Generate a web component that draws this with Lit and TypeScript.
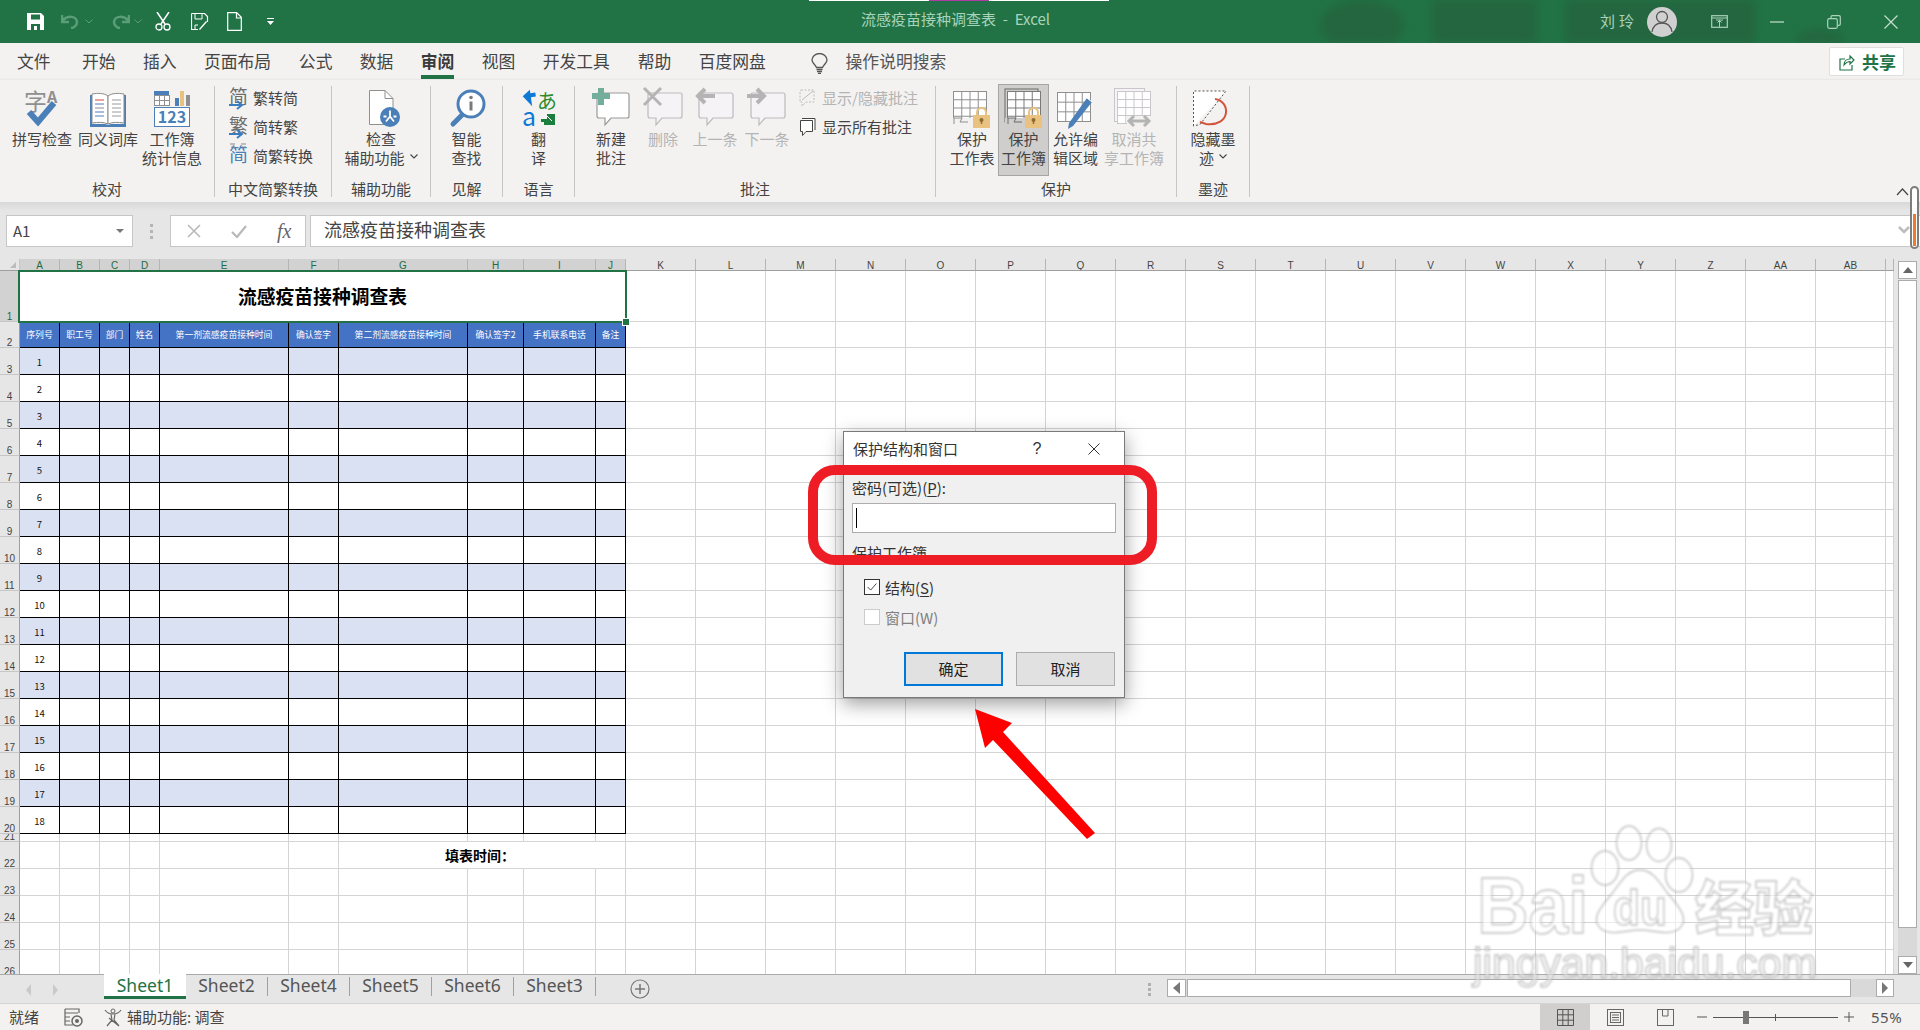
import { LitElement, html, css, svg } from "lit";
import { customElement } from "lit/decorators.js";

const LETTERS = "A B C D E F G H I J K L M N O P Q R S T U V W X Y Z AA AB".split(" ");
const HEADS = ["序列号", "职工号", "部门", "姓名", "第一剂流感疫苗接种时间", "确认签字", "第二剂流感疫苗接种时间", "确认签字2", "手机联系电话", "备注"];
const range = (a: number, b: number) => Array.from({ length: b - a + 1 }, (_, i) => a + i);

const ic = (w: number, h: number, body: unknown) =>
  html`<svg width=${w} height=${h} viewBox="0 0 ${w} ${h}" fill="none" overflow="visible">${body}</svg>`;

const bubble = (x: number, y: number, w: number, h: number, stroke: string, fill: string) => svg`
  <path d="M${x + 2} ${y}H${x + w - 2}Q${x + w} ${y} ${x + w} ${y + 2}V${y + h - 2}Q${x + w} ${y + h} ${x + w - 2} ${y + h}H${x + 14}L${x + 8} ${y + h + 7}V${y + h}H${x + 2}Q${x} ${y + h} ${x} ${y + h - 2}V${y + 2}Q${x} ${y} ${x + 2} ${y}Z" fill=${fill} stroke=${stroke} stroke-width="1.2"/>`;

const sheetGrid = (x: number, y: number, w: number, h: number, stroke: string, nx: number, ny: number) => svg`
  <rect x=${x + 0.5} y=${y + 0.5} width=${w} height=${h} fill="#fff" stroke=${stroke}/>
  ${range(1, nx - 1).map((i) => svg`<path d="M${x + 0.5 + (i * w) / nx} ${y}v${h}" stroke=${stroke}/>`)}
  ${range(1, ny - 1).map((i) => svg`<path d="M${x} ${y + 0.5 + (i * h) / ny}h${w}" stroke=${stroke}/>`)}`;

const lock = (x: number, y: number) => svg`
  <path d="M${x + 4} ${y + 9}V${y + 5.5}a4.5 4.5 0 0 1 9 0V${y + 9}" stroke="#e8c27e" stroke-width="2"/>
  <rect x=${x} y=${y + 8} width="17" height="13" fill="#e8c27e"/>
  <circle cx=${x + 8.5} cy=${y + 13} r="2" fill="#8a6a35"/><path d="M${x + 8.5} ${y + 13}v4" stroke="#8a6a35" stroke-width="1.4"/>`;

const I = {
  spell: ic(36, 40, svg`
    <text x="0" y="22" class="svgt" font-size="23" fill="#8f8f8f">字</text>
    <text x="23" y="15" class="svgt" font-size="16" font-weight="700" fill="#8f8f8f">A</text>
    <path d="M5 24l9 10L30 15" stroke="#4a7fb8" stroke-width="6"/>`),
  book: ic(38, 40, svg`<g transform="translate(0 4)">
    <path d="M1 3h2v29h13l3 1 3-1h13V3h2v32H1Z" fill="#4a7fb8"/>
    <path d="M3 2c6-1 12-1 16 2v28c-4-2-10-2-16-1Z" fill="#fff" stroke="#8a8a8a"/>
    <path d="M35 2c-6-1-12-1-16 2v28c4-2 10-2 16-1Z" fill="#fff" stroke="#8a8a8a"/>
    <path d="M6 8h9" stroke="#d24b33"/><path d="M6 12h9M6 20h9M6 24h9" stroke="#4a7fb8"/><path d="M6 16h9" stroke="#8a8a8a"/>
    <path d="M23 8h9M23 12h9M23 16h9M23 20h9M23 24h9" stroke="#9a9a9a"/></g>`),
  stats: ic(38, 40, svg`<g transform="translate(0 2)">
    <rect x="1" y="1" width="15" height="4" fill="#4a7fb8"/>
    ${sheetGrid(1, 5, 15, 10, "#8f8f8f", 3, 2)}
    <rect x="22" y="8" width="4" height="8" fill="#4a7fb8"/><rect x="27" y="1" width="4" height="15" fill="#e8c27e"/><rect x="33" y="5" width="4" height="11" fill="#8f8f8f"/>
    <rect x="1.5" y="17.5" width="35" height="19" fill="#fff" stroke="#4a7fb8"/>
    <text x="19" y="33" text-anchor="middle" class="svgt" font-size="16" font-weight="700" fill="#4a7fb8">123</text></g>`),
  check: ic(40, 40, svg`
    <path d="M8.500 2.500H24l8 8V36.500H8.500Z" fill="#fff" stroke="#8f8f8f"/><path d="M24 2.500v8h8" stroke="#8f8f8f"/>
    <circle cx="29" cy="29" r="10" fill="#4a7fb8"/>
    <path d="M29 22.500v6m-4 5 4-5 4 5M22.500 28.500h3M32.500 28.500h3" stroke="#fff" stroke-width="1.800"/>`),
  search: ic(38, 44, svg`
    <circle cx="23" cy="16" r="13" fill="#fff" stroke="#4a7fb8" stroke-width="3"/>
    <path d="M14 27 5 36" stroke="#4a7fb8" stroke-width="5" stroke-linecap="round"/>
    <circle cx="23" cy="9.500" r="1.800" fill="#7a7a7a"/><path d="M23 13.500v9" stroke="#7a7a7a" stroke-width="3"/>`),
  translate: ic(36, 44, svg`
    <path d="M2 7.500 10 2v3.500h5v4h-5v9Z" transform="rotate(-8 8 10)" fill="#0f7ad6"/>
    <text x="16" y="21" class="svgt" font-size="20" fill="#2e8b2e">あ</text>
    <text x="1" y="38" class="svgt" font-size="26" fill="#0f7ad6" textLength="14" lengthAdjust="spacingAndGlyphs">a</text>
    <path d="M20 31h6v-5l8 0v11H23v-3h-3Z" fill="#1a7f3c"/><path d="M26 28l5 5" stroke="#fff" stroke-width="1"/>`),
  newc: ic(38, 40, svg`${bubble(5, 5, 32, 25, "#9a9a9a", "#fff")}<path d="M0 8h18M9 0v17" stroke="#72ae9b" stroke-width="6"/>`),
  delc: ic(40, 40, svg`${bubble(5, 5, 34, 25, "#bdbabd", "#f6f3f7")}<path d="M1 0 18 17M18 0 1 17" stroke="#b4b4b4" stroke-width="3"/>`),
  prevc: ic(40, 40, svg`${bubble(4, 5, 34, 25, "#bdbabd", "#f6f3f7")}<path d="M20 8H3m7-7-7 7 7 7" stroke="#b4b4b4" stroke-width="4"/>`),
  nextc: ic(40, 40, svg`${bubble(4, 5, 34, 25, "#bdbabd", "#f6f3f7")}<path d="M0 8h17m-7-7 7 7-7 7" stroke="#b4b4b4" stroke-width="4"/>`),
  prot: ic(40, 42, svg`${sheetGrid(1, 3, 33, 33, "#8f8f8f", 4, 4)}<rect x="1" y="30" width="34" height="7" fill="#f3f2f1"/><path d="M2 36v-6h8l-2 4h8" stroke="#8f8f8f"/>${lock(21, 19)}`),
  protb: ic(40, 42, svg`<rect x="1" y="1" width="33" height="33" fill="#cfcecc" stroke="#6a6a6a"/>${sheetGrid(3, 3, 33, 33, "#7a7a7a", 4, 4)}<rect x="1" y="30" width="34" height="8" fill="#cfcecc"/><path d="M4 36v-6h8l-2 4h8" stroke="#6a6a6a"/>${lock(21, 19)}`),
  allow: ic(40, 44, svg`${sheetGrid(1, 4, 33, 29, "#8f8f8f", 4, 3)}<path d="M36 14 17 38l-5 3 1-6L31 10Z" fill="#4a7fb8"/><path d="M31 10l5 4" stroke="#fff"/>`),
  unshare: ic(40, 42, svg`<rect x=".5" y=".5" width="30" height="33" stroke="#c9c6cc" fill="#f6f3f7"/>${sheetGrid(3, 3, 33, 32, "#c9c6cc", 4, 4)}<rect x="13" y="28" width="27" height="14" fill="#f3f2f1"/><path d="M15 33h20m-15-5-5 5 5 5m10-10 5 5-5 5" stroke="#b4b4b4" stroke-width="3"/>`),
  ink: ic(40, 40, svg`
    <path d="M.5 3H33L.5 38Z" fill="#fff"/><path d="M.500 38V3H33L7 36.500Z" stroke="#555" stroke-dasharray="2 2"/>
    <path d="M22 11c16 2 16 28-9 25l-6-2" stroke="#d2553c" stroke-width="2"/>`),
  showc: ic(18, 20, svg`<path d="M3 2h13v12H8l-4 4v-4H2V3Z" stroke="#bdbabd" stroke-dasharray="2 1.500" fill="#f3f2f1"/><path d="M4 12 15 3" stroke="#bdbabd"/>`),
  allc: ic(18, 20, svg`<path d="M4 1.500h13V13M2.500 3.500h12v11H8l-3.500 4v-4h-2Z" stroke="#444" fill="#fff"/>`),
};

const smallIcon = (ch: string, blue = false) => ic(24, 26, svg`
  <text x="0" y="19" class="svgt" font-size="19" fill=${blue ? "#4a7fb8" : "#6d6d6d"}>${ch}</text>
  ${blue ? svg`<path d="M1 1h5M2 4h4M12 1h5M13 4h4" stroke="#888"/>` : svg`<path d="M0 20h12m-4-4 5 4-5 4" stroke="#3a7cc0" stroke-width="2"/>`}`);

const chev = html`<svg class="chev" width="8" height="5" viewBox="0 0 8 5" fill="none"><path d="M.5.500 4 4 7.500.500" stroke="#444" stroke-width="1.100"/></svg>`;

@customElement("big-btn")
class BigBtn extends LitElement {
  static properties = { w: { type: Number }, icon: {}, l1: {}, l2: {}, dis: { type: Boolean }, on: { type: Boolean }, more: { type: Boolean } };
  w = 52; icon: unknown; l1 = ""; l2 = ""; dis = false; on = false; more = false;
  static styles = css`
    :host { display: block; flex: none; }
    .b { box-sizing: border-box; height: 92px; padding-top: 3px; display: flex; flex-direction: column; align-items: center; color: #444; font: 15px/19px "Noto Sans CJK SC", sans-serif; white-space: nowrap; border: 1px solid transparent; }
    .b.dis { color: #b4b4b4; }
    .b.on { background: #cfcecc; border-color: #a6a6a6; }
    .i { height: 41px; display: flex; align-items: flex-start; justify-content: center; }
    .svgt { font-family: "Noto Sans CJK SC", sans-serif; }
    .chev { margin: 0 0 3px 5px; }
    .l { display: flex; align-items: center; height: 19px; }
  `;
  render() {
    return html`<div class="b ${this.dis ? "dis" : ""} ${this.on ? "on" : ""}" style="width:${this.w}px">
      <div class="i">${this.icon}</div>
      <div class="l">${this.l1}</div>
      <div class="l">${this.l2}${this.more ? chev : ""}</div>
    </div>`;
  }
}

@customElement("app-root")
class AppRoot extends LitElement {
  static styles = css`
    :host { display: block; width: 1920px; height: 1030px; position: relative; overflow: hidden; font-family: "Noto Sans CJK SC", sans-serif; background: #e6e6e6; color: #444; }
    .svgt { font-family: "Noto Sans CJK SC", "Liberation Sans", sans-serif; }

    .title { height: 43px; background: #217346; position: relative; display: flex; align-items: center; color: #a9d3ba; overflow: hidden; }
    .texture { position: absolute; inset: 0; filter: blur(4px); }
    .strip { position: absolute; left: 809px; top: 0; width: 300px; height: 1px; background: #fff; }
    .strip i { position: absolute; left: 120px; width: 60px; height: 1px; background: #b03aa8; }
    .qat { position: relative; display: flex; align-items: center; padding-left: 27px; width: 861px; box-sizing: border-box; height: 43px; flex: none; }
    .qi { display: block; flex: none; }
    .ttext { position: relative; font-size: 15px; width: 739px; flex: none; white-space: pre; margin-top: -6px; }
    .user { position: relative; font-size: 15px; width: 47px; flex: none; letter-spacing: 4px; white-space: nowrap; margin-top: -2px; }
    .avatar { position: relative; flex: none; width: 30px; height: 30px; border-radius: 50%; background: #d0d0d0; display: block; }
    .winb { position: relative; display: flex; align-items: center; flex: none; }

    .tabs { height: 37px; background: #f3f2f1; display: flex; position: relative; font-size: 16.8px; color: #444; }
    .tab { position: relative; height: 37px; line-height: 36px; flex: none; white-space: nowrap; }
    .tab.act { font-weight: 700; color: #3a3a3a; }
    .tab.act::after { content: ""; position: absolute; left: 0; right: 0; top: 32px; height: 4px; background: #217346; }
    .bulb { flex: none; margin: 10px 18px 0 0; display: block; }
    .share { position: absolute; left: 1829px; top: 4px; width: 75px; height: 29px; box-sizing: border-box; background: #fff; border: 1px solid #e1dfdd; border-radius: 2px; display: flex; align-items: center; padding-left: 9px; gap: 7px; color: #217346; font-weight: 700; font-size: 17px; }

    .ribbon { height: 122px; background: #f3f2f1; display: flex; position: relative; box-shadow: 0 1px 3px rgba(0,0,0,.22); z-index: 2; box-sizing: border-box; padding-top: 6px; }
    .group { box-sizing: border-box; height: 111px; border-right: 1px solid #c8c6c4; flex: none; display: flex; flex-direction: column; }
    .row { display: flex; height: 92px; margin-top: -2px; flex: none; }
    .glabel { text-align: center; font-size: 15px; line-height: 15px; margin-top: 5px; color: #444; white-space: nowrap; }
    .smalls { display: flex; flex-direction: column; flex: none; margin-top: -1px; }
    .sm { display: flex; align-items: center; height: 29px; font-size: 15px; white-space: nowrap; color: #444; }
    .sm.dis { color: #b4b4b4; }
    .sm .si { width: 24px; flex: none; display: flex; }
    .collapse { position: absolute; left: 1896px; top: 108px; display: block; }

    .fbar { height: 57px; flex: none; box-sizing: border-box; padding-top: 13px; background: linear-gradient(#d8d8d8, #e6e6e6 9px); display: flex; font-size: 15px; position: relative; z-index: 3; }
    .fb { box-sizing: border-box; height: 32px; background: #fff; border: 1px solid #c6c6c6; flex: none; display: flex; align-items: center; }
    .name { margin-left: 6px; width: 127px; padding: 0 8px 2px 6px; justify-content: space-between; color: #444; font-size: 15px; }
    .caret { width: 0; height: 0; border: 4px solid transparent; border-top: 4px solid #777; border-bottom: 0; margin-top: 2px; }
    .dots { width: 37px; flex: none; display: flex; flex-direction: column; align-items: center; gap: 3px; justify-content: center; height: 32px; }
    .dots i { width: 3px; height: 3px; background: #b5b5b5; display: block; }
    .fn { width: 136px; padding: 0 0 0 16px; gap: 30px; }
    .fx { font: italic 400 20px/20px "Liberation Serif", serif; color: #666; }
    .finput { margin-left: 4px; flex: 1; font-size: 18px; padding: 0 0 4px 13px; border-right: 0; color: #444; }
    .fchev { position: absolute; left: 1898px; top: 24px; display: block; }
    .orange { position: absolute; left: 1910px; top: -16px; width: 9px; height: 63px; box-sizing: border-box; border: 2px solid #7d7d7d; border-radius: 5px; background: #fff; display: flex; align-items: flex-end; justify-content: center; padding-bottom: 1px; }
    .orange i { display: block; width: 3px; height: 32px; background: #ee7b2d; }

    .main { height: 715px; flex: none; display: flex; }
    .sheet { width: 1894px; flex: none; height: 715px; overflow: hidden; display: grid; background: #fff; box-sizing: border-box;
      grid-template-columns: 20px 40px 40px 30px 30px 129px 50px 129px 56px 72px 30px repeat(18, 70px) 8px;
      grid-template-rows: 12px 51px 26px repeat(18, 27px) 8px repeat(5, 27px); }
    .corner { background: #e6e6e6; border-right: 1px solid #c6c6c6; border-bottom: 1px solid #9f9f9f; position: relative; box-sizing: border-box; }
    .corner::after { content: ""; position: absolute; right: 3px; bottom: 2px; border-style: solid; border-width: 0 0 6px 6px; border-color: transparent transparent #bcbcbc transparent; }
    .ch { box-sizing: border-box; background: #e6e6e6; border-right: 1px solid #b5b5b5; border-bottom: 1px solid #9f9f9f; font: 10px/13px "Liberation Sans", sans-serif; color: #444; text-align: center; overflow: hidden; }
    .ch.sel { background: #d2d2d2; color: #1f6b41; }
    .rh { box-sizing: border-box; background: #e6e6e6; border-right: 1px solid #9f9f9f; border-bottom: 1px solid #c6c6c6; font: 10px/9px "Liberation Sans", sans-serif; color: #444; display: flex; align-items: flex-end; justify-content: center; overflow: hidden; }
    .rh.sel { background: #d2d2d2; color: #1f6b41; }
    .c { box-sizing: border-box; border-right: 1px solid #d4d4d4; border-bottom: 1px solid #d4d4d4; min-width: 0; }
    .tcell { border-right-color: #000; border-bottom-color: #000; display: flex; align-items: center; justify-content: center; font-size: 9.5px; color: #111; padding-top: 2px; }
    .tcell.band { background: #d9e1f2; }
    .thead { background: #4472c4; color: #fff; font-size: 8.8px; font-weight: 400; white-space: nowrap; padding-top: 0; }
    .titlec { grid-column: span 10; position: relative; display: flex; align-items: center; justify-content: center; font-size: 18.8px; font-weight: 700; color: #000; border: 2px solid #217346; margin: -1px -1px -1px -2px; z-index: 1; padding-bottom: 2px; }
    .handle { position: absolute; right: -4px; bottom: -4px; width: 6px; height: 6px; background: #217346; border: 1px solid #fff; box-sizing: content-box; margin: 0 -1px -1px 0; }
    .fill { grid-column: span 4; display: flex; align-items: center; justify-content: center; font-size: 14px; font-weight: 700; color: #000; padding-right: 4px; white-space: nowrap; }

    .vbar { width: 26px; flex: none; box-sizing: border-box; padding: 2px 3px 0 4px; display: flex; flex-direction: column; background: #e6e6e6; }
    .sbtn { box-sizing: border-box; background: #fff; border: 1px solid #ababab; flex: none; display: flex; align-items: center; justify-content: center; }
    .vbar .sbtn { height: 18px; }
    .vthumb { box-sizing: border-box; height: 648px; margin-top: 1px; background: #fff; border: 1px solid #ababab; flex: none; }
    .vtrack { flex: 1; background: #d9d9d9; }
    .ta { width: 0; height: 0; border: solid transparent; }
    .ta.u { border-width: 0 5px 6px; border-bottom-color: #666; }
    .ta.d { border-width: 6px 5px 0; border-top-color: #666; }
    .ta.l { border-width: 6px 7px 6px 0; border-right-color: #777; }
    .ta.r { border-width: 6px 0 6px 6px; border-left-color: #777; }

    .sbar { height: 29px; flex: none; box-sizing: border-box; display: flex; background: #e6e6e6; border-top: 1px solid #ababab; position: relative; font: 17.500px/21px "Noto Sans", sans-serif; color: #555; }
    .nav { width: 104px; flex: none; display: flex; align-items: center; padding-left: 26px; gap: 22px; box-sizing: border-box; padding-top: 1px; }
    .tl { width: 0; height: 0; border: solid transparent; }
    .tl.a { border-width: 6px 5px 6px 0; border-right-color: #c9c9c9; }
    .tl.b { border-width: 6px 0 6px 5px; border-left-color: #c9c9c9; }
    .stab { height: 19px; flex: none; box-sizing: border-box; margin-top: 2px; line-height: 16px; border-right: 1px solid #a0a0a0; width: 82px; text-align: center; white-space: nowrap; }
    .stab.act { width: 82px; height: 25px; margin-top: -1px; padding-top: 1px; background: #fff; color: #217346; border-right: 0; border-bottom: 3px solid #217346; line-height: 20px; }
    .plus { margin: 4px 0 0 34px; display: block; flex: none; }
    .sdots { position: absolute; left: 1148px; top: 8px; display: flex; flex-direction: column; gap: 2px; }
    .sdots i { display: block; width: 3px; height: 3px; background: #b0b0b0; }
    .hbar { position: absolute; left: 1167px; top: 4px; width: 727px; height: 18px; display: flex; background: #d9d9d9; }
    .hbar .sbtn { width: 19px; height: 18px; }
    .hbar .last { width: 18px; }
    .hthumb { box-sizing: border-box; width: 664px; margin-left: 1px; background: #fff; border: 1px solid #ababab; }
    .hsp { flex: 1; }

    .status { height: 27px; flex: none; background: #f3f2f1; display: flex; align-items: center; position: relative; font-size: 15px; color: #444; border-top: 1px solid #d5d5d5; box-sizing: border-box; }
    .status .t1 { margin: -2px 0 0 9px; width: 55px; flex: none; }
    .status .ic2 { display: block; flex: none; }
    .status .t2 { white-space: nowrap; flex: none; margin-top: -2px; }
    .views { margin-left: auto; display: flex; align-items: center; height: 26px; flex: none; margin-right: 20px; }
    .view { width: 50px; height: 26px; display: flex; align-items: center; justify-content: center; flex: none; }
    .view.act { background: #d0cfcd; }
    .zoomv { display: flex; align-items: center; flex: none; margin-left: 7px; }
    .slider { width: 125px; height: 1px; background: #555; position: relative; margin: 0 6px; flex: none; }
    .thumb { position: absolute; left: 30px; top: -6px; width: 6px; height: 13px; background: #777; }
    .tick { position: absolute; left: 62px; top: -3px; width: 1px; height: 7px; background: #555; }
    .pct { margin-left: 17px; width: 29px; font: 15px "Noto Sans", sans-serif; flex: none; white-space: nowrap; letter-spacing: .5px; color: #555; }

    .dialog { position: absolute; left: 843px; top: 431px; width: 282px; height: 267px; box-sizing: border-box; border: 1px solid #7a7a7a; background: #f0f0f0; box-shadow: 0 6px 18px rgba(0,0,0,.38); z-index: 5; display: flex; flex-direction: column; color: #333; font-size: 15px; }
    .dtitle { height: 35px; box-sizing: border-box; padding: 0 0 2px 9px; flex: none; background: #fff; display: flex; align-items: center; color: #333; }
    .dtitle .t { width: 174px; flex: none; white-space: nowrap; }
    .q { width: 20px; text-align: center; font: 16px "Liberation Sans", sans-serif; flex: none; }
    .dclose { margin-left: 41px; display: block; flex: none; }
    .dbody { padding: 11px 7px 0 8px; display: flex; flex-direction: column; flex: 1; }
    .lbl { line-height: 20px; height: 20px; white-space: nowrap; }
    u { text-underline-offset: 2px; }
    .input { box-sizing: border-box; height: 30px; margin-top: 5px; background: #fff; border: 1px solid #adadad; width: 264px; padding: 4px 3px; flex: none; }
    .input i { display: block; width: 1px; height: 20px; background: #000; }
    .legend { margin-top: 10px; height: 20px; line-height: 20px; }
    .chk { display: flex; align-items: center; gap: 5px; height: 30px; padding-left: 12px; }
    .box { box-sizing: border-box; width: 16px; height: 16px; border: 1px solid #333; background: #fff; display: block; flex: none; }
    .chk.first { margin-top: 9px; }
    .chk.dis { color: #808080; }
    .chk.dis .box { border-color: #ccc; }
    .btns { display: flex; gap: 13px; padding-left: 52px; margin-top: 20px; }
    .btn { box-sizing: border-box; width: 99px; height: 34px; background: #e1e1e1; border: 1px solid #adadad; display: flex; align-items: center; justify-content: center; flex: none; color: #222; padding-bottom: 1px; }
    .btn.def { border: 2px solid #0078d7; }
    .over { position: absolute; left: 0; top: 0; width: 1920px; height: 1030px; z-index: 6; pointer-events: none; display: block; }
    .wm { position: absolute; left: 0; top: 0; width: 1920px; height: 1030px; z-index: 3; pointer-events: none; display: block; filter: blur(.8px); }
    .wm text, .wm ellipse, .wm path { fill: rgba(255,255,255,.55); stroke: rgba(160,160,160,.65); stroke-width: 1.4px; }
  `;

  private tabsRow() {
    const t: [string, number, boolean?][] = [["文件", 17], ["开始", 82], ["插入", 143], ["页面布局", 204], ["公式", 299], ["数据", 360], ["审阅", 421, true], ["视图", 482], ["开发工具", 543], ["帮助", 638], ["百度网盘", 699]];
    let x = 0;
    return html`<div class="tabs">
      ${t.map(([n, at, act]) => {
        const m = at - x;
        x = at + n.length * 16.8;
        return html`<div class="tab ${act ? "act" : ""}" style="margin-left:${m}px">${n}</div>`;
      })}
      <svg class="bulb" style="margin-left:${811 - x}px" width="17" height="21" viewBox="0 0 17 21" fill="none"><path d="M5.500 14.500C4 11 1 10 1 7a7.500 6.500 0 0 1 15 0c0 3-3 4-4.500 7.500Z" stroke="#555" stroke-width="1.300"/><path d="M5.500 16.500h6M6 18.500h5M7 20.500h3" stroke="#555" stroke-width="1.300"/></svg>
      <div class="tab" style="color:#555">操作说明搜索</div>
      <div class="share">
        <svg width="16" height="18" viewBox="0 0 16 18" fill="none"><path d="M6 6H1v11h12v-5" stroke="#217346" stroke-width="1.200"/><path d="M5 12c0-4 3-6 6-6V3l4 4-4 4V8.500c-2 0-4 1-6 3.500Z" stroke="#217346" stroke-width="1.200"/></svg>
        <span>共享</span>
      </div>
    </div>`;
  }

  private big(w: number, icon: unknown, l1: string, l2: string, o: { dis?: boolean; on?: boolean; more?: boolean } = {}) {
    return html`<big-btn .w=${w} .icon=${icon} .l1=${l1} .l2=${l2} .dis=${!!o.dis} .on=${!!o.on} .more=${!!o.more}></big-btn>`;
  }

  private ribbon() {
    return html`<div class="ribbon">
      <div class="group" style="width:215px"><div class="row" style="padding-left:9px">
        ${this.big(66, I.spell, "拼写检查", "")}${this.big(66, I.book, "同义词库", "")}${this.big(62, I.stats, "工作簿", "统计信息")}
      </div><div class="glabel">校对</div></div>
      <div class="group" style="width:117px"><div class="row" style="padding-left:14px"><div class="smalls">
        <div class="sm"><span class="si">${smallIcon("简")}</span>繁转简</div>
        <div class="sm"><span class="si">${smallIcon("繁")}</span>简转繁</div>
        <div class="sm"><span class="si">${smallIcon("简", true)}</span>简繁转换</div>
      </div></div><div class="glabel">中文简繁转换</div></div>
      <div class="group" style="width:99px"><div class="row">${this.big(98, I.check, "检查", "辅助功能", { more: true })}</div><div class="glabel">辅助功能</div></div>
      <div class="group" style="width:72px"><div class="row">${this.big(71, I.search, "智能", "查找")}</div><div class="glabel">见解</div></div>
      <div class="group" style="width:72px"><div class="row">${this.big(71, I.translate, "翻", "译")}</div><div class="glabel">语言</div></div>
      <div class="group" style="width:361px"><div class="row" style="padding-left:10px">
        ${this.big(52, I.newc, "新建", "批注")}${this.big(52, I.delc, "删除", "", { dis: true })}${this.big(52, I.prevc, "上一条", "", { dis: true })}${this.big(52, I.nextc, "下一条", "", { dis: true })}
        <div class="smalls" style="margin-left:5px">
          <div class="sm dis"><span class="si">${I.showc}</span>显示/隐藏批注</div>
          <div class="sm"><span class="si">${I.allc}</span>显示所有批注</div>
        </div>
      </div><div class="glabel">批注</div></div>
      <div class="group" style="width:241px"><div class="row" style="padding-left:10px">
        ${this.big(52, I.prot, "保护", "工作表")}${this.big(51, I.protb, "保护", "工作簿", { on: true })}${this.big(53, I.allow, "允许编", "辑区域")}${this.big(64, I.unshare, "取消共", "享工作簿", { dis: true })}
      </div><div class="glabel">保护</div></div>
      <div class="group" style="width:73px"><div class="row">${this.big(72, I.ink, "隐藏墨", "迹", { more: true })}</div><div class="glabel">墨迹</div></div>
      <svg class="collapse" width="13" height="8" viewBox="0 0 13 8" fill="none"><path d="M1 7 6.500 1 12 7" stroke="#444" stroke-width="1.200"/></svg>
    </div>`;
  }

  private sheet() {
    const cells: unknown[] = [html`<div class="corner"></div>`];
    LETTERS.forEach((l, i) => cells.push(html`<div class="ch ${i < 10 ? "sel" : ""}">${l}</div>`));
    cells.push(html`<div class="ch"></div>`);
    for (const r of range(1, 26)) {
      cells.push(html`<div class="rh ${r === 1 ? "sel" : ""}">${r}</div>`);
      let start = 0;
      if (r === 1) {
        cells.push(html`<div class="c titlec">流感疫苗接种调查表<i class="handle"></i></div>`);
        start = 10;
      } else if (r === 2) {
        HEADS.forEach((h) => cells.push(html`<div class="c tcell thead">${h}</div>`));
        start = 10;
      } else if (r >= 3 && r <= 20) {
        const band = r % 2 === 1;
        for (let k = 0; k < 10; k++) cells.push(html`<div class="c tcell ${band ? "band" : ""}">${k === 0 ? r - 2 : ""}</div>`);
        start = 10;
      } else if (r === 22) {
        for (let k = 0; k < 6; k++) cells.push(html`<div class="c"></div>`);
        cells.push(html`<div class="c fill">填表时间：</div>`);
        start = 10;
      }
      for (let k = start; k < 29; k++) cells.push(html`<div class="c"></div>`);
    }
    return html`<div class="sheet">${cells}</div>`;
  }

  private status() {
    return html`<div class="status">
      <span class="t1">就绪</span>
      <svg class="ic2" width="19" height="19" viewBox="0 0 19 19" fill="none"><path d="M1 1h14v4M1 1v16h8M1 5h13M1 9h5M1 13h5" stroke="#666" stroke-width="1.200"/><circle cx="13" cy="13" r="5" stroke="#666" stroke-width="1.500"/><circle cx="13" cy="13" r="2" fill="#666"/></svg>
      <svg class="ic2" style="margin-left:21px" width="18" height="19" viewBox="0 0 18 19" fill="none"><circle cx="9" cy="3" r="2" stroke="#666"/><path d="M1 2c2 3 4 4 8 4s6-1 8-4M7 6l1 6-5 6M11 6l-1 6 5 6M5 10l10 8" stroke="#666" stroke-width="1.200"/></svg>
      <span class="t2" style="margin-left:5px">辅助功能: 调查</span>
      <div class="views">
        <div class="view act"><svg width="17" height="17" viewBox="0 0 17 17" fill="none"><path d="M.5.500h16v16H.500ZM.5 5.800h16M.5 11.200h16M5.800.5v16M11.200.5v16" stroke="#555"/></svg></div>
        <div class="view"><svg width="17" height="17" viewBox="0 0 17 17" fill="none"><rect x=".5" y=".5" width="16" height="16" stroke="#666"/><rect x="3.500" y="3.500" width="10" height="10" stroke="#666"/><path d="M5 6h7M5 8.500h7M5 11h7" stroke="#666"/></svg></div>
        <div class="view"><svg width="17" height="17" viewBox="0 0 17 17" fill="none"><rect x=".5" y=".5" width="16" height="16" stroke="#666"/><path d="M5.500.500V7H11V.5" stroke="#666"/></svg></div>
        <div class="zoomv">
          <svg width="10" height="2" viewBox="0 0 10 2"><path d="M0 1h10" stroke="#555"/></svg>
          <div class="slider"><i class="tick"></i><i class="thumb"></i></div>
          <svg width="10" height="10" viewBox="0 0 10 10"><path d="M0 5h10M5 0v10" stroke="#555"/></svg>
          <span class="pct">55%</span>
        </div>
      </div>
    </div>`;
  }

  render() {
    return html`
      <div class="title">
        <svg class="texture" viewBox="0 0 1920 43" width="1920" height="43" preserveAspectRatio="none">
          <g fill="#24663f">
            <ellipse cx="1362" cy="25" rx="42" ry="25"/><rect x="1432" y="-10" width="105" height="63"/><rect x="1565" y="-10" width="190" height="63"/>
            <ellipse cx="1820" cy="44" rx="26" ry="14"/>
          </g>
        </svg>
        <div class="strip"><i></i></div>
        <div class="qat">
          <svg class="qi" width="17" height="17" viewBox="0 0 17 17"><path d="M0 0h14l3 3v14H0Z" fill="#fff"/><rect x="4" y="1.500" width="9" height="5" fill="#217346"/><path d="M4 11h9v6h-3v-4H7v4H4Z" fill="#217346"/></svg>
          <svg class="qi" style="margin-left:17px" width="20" height="15" viewBox="0 0 20 15" fill="none"><path d="M2 6c4-4 13-5 14 2 0 3-3 6-6 6M1 1v7h7" stroke="#5a9d78" stroke-width="2.500"/></svg>
          <svg class="qi" style="margin-left:4px" width="8" height="5" viewBox="0 0 8 5" fill="none"><path d="M.5.500 4 4 7.500.500" stroke="#5a9d78"/></svg>
          <svg class="qi" style="margin-left:17px" width="20" height="15" viewBox="0 0 20 15" fill="none"><path d="M18 6C14 2 5 1 4 8c0 3 3 6 6 6M19 1v7h-7" stroke="#5a9d78" stroke-width="2.500"/></svg>
          <svg class="qi" style="margin-left:4px" width="8" height="5" viewBox="0 0 8 5" fill="none"><path d="M.5.500 4 4 7.500.500" stroke="#5a9d78"/></svg>
          <svg class="qi" style="margin-left:13px" width="16" height="19" viewBox="0 0 16 19" fill="none"><path d="M2 0l8 12M14 0 6 12" stroke="#fff" stroke-width="1.500"/><circle cx="4" cy="15" r="3" stroke="#fff" stroke-width="1.300"/><circle cx="12" cy="15" r="3" stroke="#fff" stroke-width="1.300"/></svg>
          <svg class="qi" style="margin-left:20px" width="18" height="18" viewBox="0 0 18 18" fill="none"><path d="M.5.500h13l3 3V9M.5.500v16H7" stroke="#fff" stroke-width="1.200"/><path d="M4 1v5h7V1M4 17v-5h3" stroke="#fff"/><path d="M16 9 9 17l-1-1 7-8Z" fill="#fff"/></svg>
          <svg class="qi" style="margin-left:18px" width="15" height="19" viewBox="0 0 15 19" fill="none"><path d="M.7.700h9l4.600 4.600v13H.7ZM9.500 1v5h5" stroke="#fff" stroke-width="1.200"/></svg>
          <svg class="qi" style="margin-left:25px" width="7" height="8" viewBox="0 0 7 8"><path d="M0 0h7v1H0ZM0 3h7L3.500 7Z" fill="#fff"/></svg>
        </div>
        <div class="ttext">流感疫苗接种调查表  -  Excel</div>
        <div class="user">刘玲</div>
        <svg class="avatar" viewBox="0 0 30 30" fill="none"><circle cx="15" cy="10" r="5.500" stroke="#555" stroke-width="1.300"/><path d="M5 25c1-6 5-9 10-9s9 3 10 9" stroke="#555" stroke-width="1.300"/></svg>
        <svg class="winb" style="margin-left:34px" width="17" height="13" viewBox="0 0 17 13" fill="none"><rect x=".7" y=".7" width="15.600" height="11.600" stroke="#a9d3ba" stroke-width="1.200"/><path d="M1 3h15M5 5h7M8.500 5.500V12M6.500 7.500 8.500 5.500l2 2" stroke="#a9d3ba"/></svg>
        <svg class="winb" style="margin-left:42px" width="14" height="2" viewBox="0 0 14 2"><path d="M0 1h14" stroke="#c5dfcf" stroke-width="1.200"/></svg>
        <svg class="winb" style="margin-left:43px" width="14" height="14" viewBox="0 0 14 14" fill="none"><rect x=".7" y="3.700" width="9.600" height="9.600" rx="1.500" stroke="#a9d3ba" stroke-width="1.200"/><path d="M4 3V2c0-.8.500-1.300 1.300-1.300H12c.8 0 1.300.5 1.300 1.300v7c0 .8-.5 1.300-1.300 1.300h-1" stroke="#a9d3ba" stroke-width="1.200"/></svg>
        <svg class="winb" style="margin-left:43px" width="14" height="14" viewBox="0 0 14 14" fill="none"><path d="M.5.500l13 13M13.500.500l-13 13" stroke="#c5dfcf" stroke-width="1.200"/></svg>
      </div>
      ${this.tabsRow()}
      ${this.ribbon()}
      <div class="fbar">
        <div class="fb name"><span>A1</span><i class="caret"></i></div>
        <div class="dots"><i></i><i></i><i></i></div>
        <div class="fb fn">
          <svg width="14" height="14" viewBox="0 0 14 14" fill="none"><path d="M1 1l12 12M13 1 1 13" stroke="#b9b9b9" stroke-width="1.600"/></svg>
          <svg width="16" height="13" viewBox="0 0 16 13" fill="none"><path d="M1 7l5 5L15 1" stroke="#b9b9b9" stroke-width="2.200"/></svg>
          <span class="fx">fx</span>
        </div>
        <div class="fb finput">流感疫苗接种调查表</div>
        <svg class="fchev" width="12" height="8" viewBox="0 0 12 8" fill="none"><path d="M1 1l5 5 5-5" stroke="#bdbdbd" stroke-width="2.500"/></svg>
        <div class="orange"><i></i></div>
      </div>
      <div class="main">
        ${this.sheet()}
        <div class="vbar">
          <div class="sbtn"><i class="ta u"></i></div>
          <div class="vthumb"></div>
          <div class="vtrack"></div>
          <div class="sbtn"><i class="ta d"></i></div>
        </div>
      </div>
      <div class="sbar">
        <div class="nav"><i class="tl a"></i><i class="tl b"></i></div>
        <div class="stab act">Sheet1</div>
        ${["Sheet2", "Sheet4", "Sheet5", "Sheet6", "Sheet3"].map((s) => html`<div class="stab">${s}</div>`)}
        <svg class="plus" width="20" height="20" viewBox="0 0 20 20" fill="none"><circle cx="10" cy="10" r="9" stroke="#777" stroke-width="1.200"/><path d="M5 10h10M10 5v10" stroke="#777" stroke-width="1.500"/></svg>
        <div class="sdots"><i></i><i></i><i></i></div>
        <div class="hbar">
          <div class="sbtn"><i class="ta l"></i></div>
          <div class="hthumb"></div>
          <div class="hsp"></div>
          <div class="sbtn last"><i class="ta r"></i></div>
        </div>
      </div>
      ${this.status()}

      <svg class="wm" viewBox="0 0 1920 1030">
        <ellipse cx="1629" cy="843" rx="12.500" ry="17"/><ellipse cx="1659" cy="845" rx="12.500" ry="16.500"/><ellipse cx="1605" cy="868" rx="13.500" ry="17"/><ellipse cx="1679" cy="875" rx="13.500" ry="17"/>
        <path d="M1640 870c14 0 20 14 30 26 12 14 18 24 10 32-10 9-26 2-40 2s-30 7-40-2c-8-8-2-18 10-32 10-12 16-26 30-26Z"/>
        <text x="1477" y="933" font-family="Liberation Sans" font-weight="700" font-size="80" textLength="111" lengthAdjust="spacingAndGlyphs">Bai</text>
        <text x="1613" y="925" font-family="Liberation Sans" font-weight="700" font-size="50" textLength="54" lengthAdjust="spacingAndGlyphs">du</text>
        <text x="1695" y="930" font-family="Noto Sans CJK SC" font-weight="900" font-size="59">经验</text>
        <text x="1473" y="978" font-family="Liberation Sans" font-size="42" textLength="344" lengthAdjust="spacingAndGlyphs">jingyan.baidu.com</text>
      </svg>

      <div class="dialog">
        <div class="dtitle"><span class="t">保护结构和窗口</span><span class="q">?</span>
          <svg class="dclose" width="12" height="12" viewBox="0 0 12 12" fill="none"><path d="M.5.500l11 11M11.500.500l-11 11" stroke="#333"/></svg>
        </div>
        <div class="dbody">
          <div class="lbl">密码(可选)(<u>P</u>):</div>
          <div class="input"><i></i></div>
          <div class="legend">保护工作簿</div>
          <div class="chk first"><svg class="box" viewBox="0 0 16 16" fill="none"><path d="M3 8l3.500 3.500L13 4" stroke="#444" stroke-width="1.100"/></svg><span>结构(<u>S</u>)</span></div>
          <div class="chk dis"><span class="box"></span><span>窗口(W)</span></div>
          <div class="btns"><div class="btn def">确定</div><div class="btn">取消</div></div>
        </div>
      </div>

      <svg class="over" viewBox="0 0 1920 1030" fill="none">
        <rect x="813" y="470" width="339" height="90" rx="22" stroke="#ee1c25" stroke-width="10"/>
        <path d="M975 709 1012 723 1003 732 1095 833 1087 839 993 740 985 748Z" fill="#fe0000"/>
      </svg>
    `;
  }
}
